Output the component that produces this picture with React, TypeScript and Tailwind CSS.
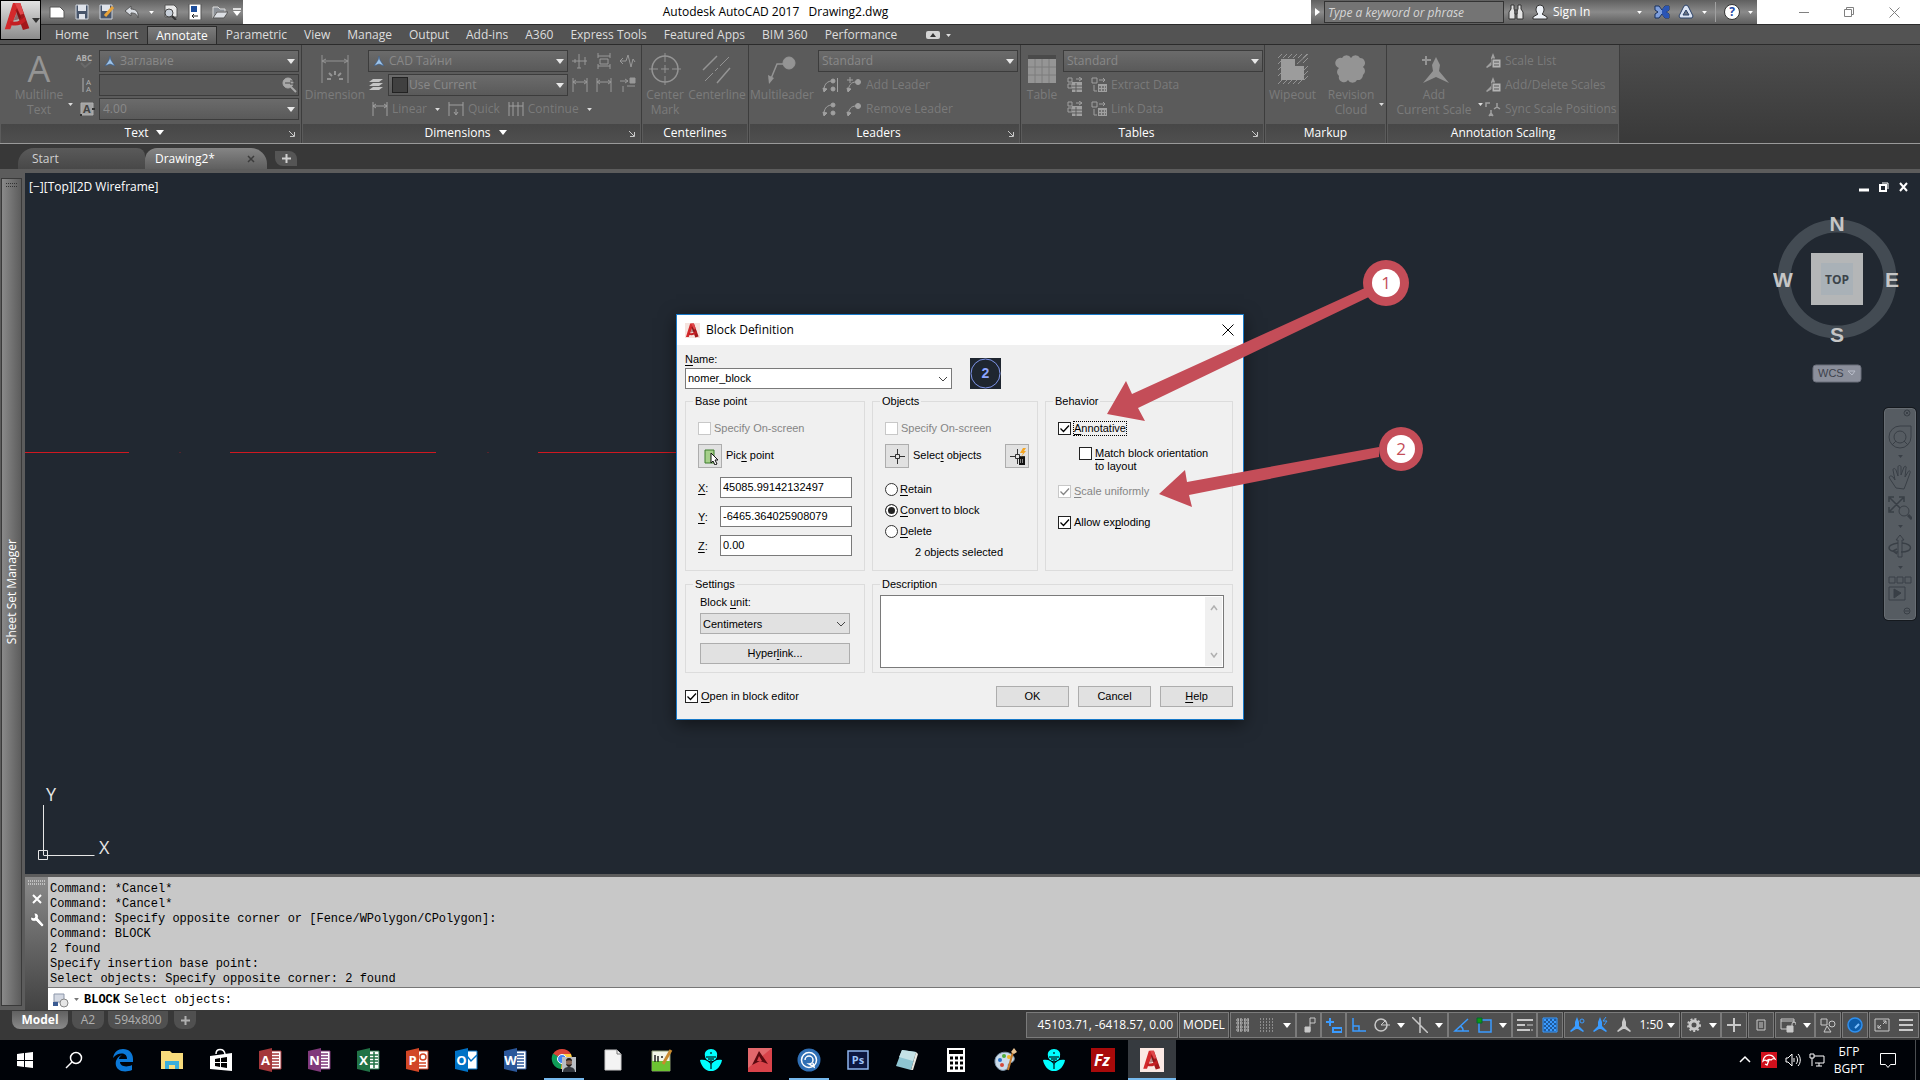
import { useState } from "react"
import type { ReactNode } from "react"
import clsx from "clsx"

const menuTabs = [
  "Home", "Insert", "Annotate", "Parametric", "View", "Manage", "Output", "Add-ins",
  "A360", "Express Tools", "Featured Apps", "BIM 360", "Performance",
]

const commandLog = [
  "Command: *Cancel*",
  "Command: *Cancel*",
  "Command: Specify opposite corner or [Fence/WPolygon/CPolygon]:",
  "Command: BLOCK",
  "2 found",
  "Specify insertion base point:",
  "Select objects: Specify opposite corner: 2 found",
]

type IconProps = { children: ReactNode; w?: number; h?: number; className?: string }

function Icon({ children, w = 16, h = 16, className }: IconProps) {
  return (
    <svg width={w} height={h} viewBox={`0 0 ${w} ${h}`} fill="none" stroke="currentColor" aria-hidden="true" className={clsx("shrink-0", className)}>
      {children}
    </svg>
  )
}

function Caret({ small, className }: { small?: boolean; className?: string }) {
  return (
    <svg width={small ? 5 : 8} height={small ? 3 : 5} viewBox="0 0 8 5" fill="currentColor" aria-hidden="true" className={clsx("shrink-0", className)}>
      <path d="M0 0h8L4 5z" />
    </svg>
  )
}

function AcadLogo({ size, className }: { size: number; className?: string }) {
  return (
    <svg width={size} height={size} viewBox="0 0 32 32" aria-hidden="true" className={clsx("shrink-0", className)}>
      <path d="M11 1h8l-8 21-3 8H2z" fill="#d3292b" />
      <path d="M19 1l10 28-7 2-8-22z" fill="#a3181b" />
      <path d="M13 1h6l4 12-4 1z" fill="#e0474a" />
      <path d="M8 21c6 2 12 0 16-5l1 5c-5 5-11 6-17 4z" fill="#c41f23" />
      <path d="M16 9l-4 11c3 0 6-1 8-3z" fill="#5a0d10" opacity=".45" />
    </svg>
  )
}

function ScaleMark({ children, className }: { children?: ReactNode; className?: string }) {
  return (
    <Icon className={className}>
      <path d="M8 0l2 5v4l5 5-1 1-5-3H7l-5 3-1-1 5-5V5z" fill="currentColor" stroke="none" />
      {children}
    </Icon>
  )
}

/* Ribbon */

function Panel({ title, width, caret, launcher, children }: { title: string; width: string; caret?: boolean; launcher?: boolean; children: ReactNode }) {
  return (
    <section className={clsx("flex shrink-0 flex-col border-r border-[#3d3d3d] bg-[#5b5b5b]", width)}>
      <div className="flex flex-1 pt-[5px]">{children}</div>
      <div
        className={clsx(
          "relative mx-px flex h-[19px] items-center justify-center gap-2 bg-gradient-to-b from-[#474747] to-[#4f4f4f] pb-0.5 text-white",
          launcher && "pr-3",
        )}
      >
        <span>{title}</span>
        {caret && <Caret />}
        {launcher && (
          <button aria-label={`${title} settings`} className="absolute right-1 top-1.5 text-[#c8c8c8]">
            <Icon w={8} h={8}><path d="M1 1l5 5M6.500 2v4.500H2" /></Icon>
          </button>
        )}
      </div>
    </section>
  )
}

function BigButton({ lines, icon, caret, width = "w-16" }: { lines: string[]; icon: ReactNode; caret?: boolean; width?: string }) {
  return (
    <button disabled className={clsx("relative flex shrink-0 flex-col items-center text-[#7c7c7c]", width)}>
      <span className="flex h-[37px] items-center text-[#949494]">{icon}</span>
      {lines.map((l) => <span key={l} className="whitespace-nowrap leading-[15px]">{l}</span>)}
      {caret && <Caret small className="absolute -right-0.5 top-[53px] text-[#dcdcdc]" />}
    </button>
  )
}

function RibbonSelect({ value, label, icon, width = "w-[200px]" }: { value: string; label: string; icon?: ReactNode; width?: string }) {
  return (
    <div className={clsx("relative h-[22px] shrink-0", width)}>
      <select
        aria-label={label}
        disabled
        className={clsx(
          "h-full w-full appearance-none border border-[#3c3c3c] bg-gradient-to-b from-[#6b6b6b] to-[#5a5a5a] text-[#898989] opacity-100",
          icon ? "pl-5" : "pl-[3px]",
        )}
      >
        <option>{value}</option>
      </select>
      {icon && <span className="absolute left-1 top-[3px]">{icon}</span>}
      <Caret className="absolute right-1 top-[9px] text-[#e8e8e8]" />
    </div>
  )
}

function SmallButton({ icon, label, caret }: { icon: ReactNode; label?: string; caret?: boolean }) {
  return (
    <button disabled className="flex h-[22px] items-center gap-1 whitespace-nowrap text-[#7a7a7a]">
      <span className="text-[#a0a0a0]">{icon}</span>
      {label}
      {caret && <Caret small className="ml-1 text-[#dcdcdc]" />}
    </button>
  )
}

const rows = "flex flex-col gap-[2px]"

const styleMark = (
  <Icon w={14}><path d="M7 3l1 4 4 6-5-2-5 2 4-6z" fill="#9cc3ea" stroke="#3f5f86" strokeWidth=".7" /></Icon>
)
const dimIcon = <Icon><path d="M1 1v14M15 1v14M1 5h14M4 3L1 5l3 2M12 3l3 2-3 2" /></Icon>
const leaderIcon = (plus: boolean) => (
  <Icon>
    <path d="M2 14C3 8 5 5 10 5" />
    <path d="M1 11l1 4 3-3z" fill="currentColor" />
    <circle cx="12" cy="5" r="2.500" fill="currentColor" />
    {plus && <path d="M4 0v6M1 3h6" />}
  </Icon>
)
const leadersIcon = (bar: boolean) => (
  <Icon>
    <path d="M2 14C2 8 4 5 9 4" />
    <path d="M1 11l1 4 3-3z" fill="currentColor" />
    <circle cx="11" cy="4" r="2" fill="currentColor" />
    <circle cx="11" cy="12" r="2" fill="currentColor" />
    {bar && <path d="M15.500 1v14" />}
  </Icon>
)
const dataIcon = (
  <Icon>
    <path d="M1 1h4v4H1zM1 7h4v4H1z" />
    <path d="M5 5h10v10H5z" fill="currentColor" stroke="none" />
    <path d="M5 9h10M5 12h10M9 6v9" stroke="#5b5b5b" />
    <path d="M9 2h6M12 0l3 2-3 2" />
  </Icon>
)
const exportIcon = (
  <Icon>
    <path d="M1 1h5v5H1zM8 3h6M12 1l2 2-2 2M3 8v6h3" />
    <path d="M7 7h9v8H7z" fill="currentColor" stroke="none" />
    <path d="M8 10h7M8 13h7" stroke="#444" strokeDasharray="2 1" />
  </Icon>
)
const scaleListIcon = (
  <ScaleMark>
    <path d="M7 6h9v9H7z" fill="#b4b4b4" stroke="#5b5b5b" />
    <path d="M9 9h5M9 12h5" stroke="#5b5b5b" />
  </ScaleMark>
)

function Ribbon() {
  return (
    <div className="flex h-[98px] bg-gradient-to-b from-[#4e4e4e] to-[#393939]">
      <Panel title="Text" width="w-[302px]" caret launcher>
        <div className="flex gap-1 pl-[7px]">
          <BigButton lines={["Multiline", "Text"]} caret icon={<span className="text-4xl leading-[37px]">A</span>} />
          <div className={clsx(rows, "w-5 items-end text-[#b0b0b0]")}>
            <span className="flex h-[22px] items-center"><Icon w={20} h={20}><text x="1" y="10" fontSize="8" fontWeight="700" fill="currentColor" stroke="none">ABC</text><path d="M6 12l4 4 6-5" stroke="#6a6a6a" strokeWidth="2" /></Icon></span>
            <span className="flex h-[22px] items-center"><Icon h={22}><path d="M4 4v14" /><text x="7" y="11" fontSize="8" fill="currentColor" stroke="none">A</text><text x="7" y="18" fontSize="8" fill="currentColor" stroke="none">A</text></Icon></span>
            <span className="flex h-[22px] items-center"><Icon h={18}><path d="M2 3h12v12H2z" fill="#a2a2a2" /><text x="4" y="13" fontSize="11" fontWeight="700" fill="#444" stroke="none">A</text><path d="M1 15h2M13 9h3" stroke="#333" strokeWidth="2" /></Icon></span>
          </div>
          <div className={rows}>
            <RibbonSelect label="Text style" value="Заглавие" icon={styleMark} />
            <div className="relative h-[22px] w-[200px]">
              <input aria-label="Find text" disabled className="h-full w-full border border-[#3c3c3c] bg-[#585858] pl-1" />
              <Icon className="absolute right-0.5 top-[3px] text-[#a8a8a8]"><circle cx="7" cy="6" r="5" fill="currentColor" /><path d="M10 10l5 5" strokeWidth="2" /><path d="M4 6h6M9 4h5M9 7h5" stroke="#4a4a4a" /></Icon>
            </div>
            <RibbonSelect label="Text height" value="4.00" />
          </div>
        </div>
      </Panel>

      <Panel title="Dimensions" width="w-[340px]" caret launcher>
        <div className="flex gap-px pl-px">
          <BigButton
            lines={["Dimension"]}
            icon={<Icon w={30} h={30}><path d="M2 1v28M28 1v28M2 7h26M6 5L2 7l4 2M24 5l4 2-4 2" /><path d="M15 17v4M9 19l3 3M21 19l-3 3M7 25h4M19 25h4" strokeWidth="2" /></Icon>}
          />
          <div className={rows}>
            <div className="flex items-center gap-1">
              <RibbonSelect label="Dimension style" value="CAD Тайни" icon={styleMark} />
              <span className="flex gap-2 text-[#999]">
                <Icon><path d="M0 8h15M7 1v14M5 15h4M13 4v8M3 6v4" /></Icon>
                <Icon><path d="M2 0v5M14 0v5M2 3h12M2 11v5M14 11v5M2 13h12M4 6h8v5H4z" /></Icon>
                <Icon><path d="M1 8h5l2-6 3 12 2-8 2 3M3 5L0 8l3 3" /></Icon>
              </span>
            </div>
            <div className="flex items-center gap-1">
              <Icon className="text-[#c4c4c4]"><path d="M5 2h10l-4 3H1zM5 6h10l-4 3H1zM5 10h10l-4 3H1z" fill="currentColor" stroke="none" /></Icon>
              <RibbonSelect label="Dimension layer" value="Use Current" width="w-[180px]" icon={<span className="block size-4 border border-[#222] bg-[#404040]" />} />
              <span className="flex gap-2 text-[#999]">
                {dimIcon}
                {dimIcon}
                <Icon><path d="M0 4h8M5 2l3 2-3 2M3 9v6M7 9h8" /><path d="M10 1h5v5h-5z" fill="currentColor" /></Icon>
              </span>
            </div>
            <div className="flex gap-2 pl-1">
              <SmallButton label="Linear" caret icon={dimIcon} />
              <SmallButton label="Quick" icon={<Icon><path d="M1 1v14M15 1v14M1 4h14M8 8v5M6 11l2 3 2-3" /></Icon>} />
              <SmallButton label="Continue" caret icon={<Icon><path d="M1 1v14M5 1v14M10 1v14M15 1v14M1 5h14" /></Icon>} />
            </div>
          </div>
        </div>
      </Panel>

      <Panel title="Centerlines" width="w-[107px]">
        <BigButton
          width="w-[46px]"
          lines={["Center", "Mark"]}
          icon={<Icon w={32} h={32}><circle cx="16" cy="16" r="13" strokeWidth="1.500" /><path d="M16 0v9M16 12v8M16 23v9M0 16h9M12 16h8M23 16h9" /></Icon>}
        />
        <BigButton
          width="w-[58px]"
          lines={["Centerline"]}
          icon={<Icon w={30} h={30}><path d="M1 16L15 2M15 29l13-15" strokeWidth="1.500" /><path d="M3 27l8-8M13 17l3-3M18 12l9-9" /></Icon>}
        />
      </Panel>

      <Panel title="Leaders" width="w-[272px]" launcher>
        <div className="flex gap-1 pl-px">
          <BigButton
            lines={["Multileader"]}
            icon={<Icon w={32} h={32}><path d="M4 28L11 11h8" strokeWidth="1.500" /><path d="M2 22l1 9 5-6z" fill="currentColor" stroke="none" /><circle cx="23" cy="10" r="6" fill="currentColor" /></Icon>}
          />
          <div className={rows}>
            <RibbonSelect label="Multileader style" value="Standard" />
            <div className="flex gap-2 pl-1"><SmallButton icon={leadersIcon(true)} /><SmallButton label="Add Leader" icon={leaderIcon(true)} /></div>
            <div className="flex gap-2 pl-1"><SmallButton icon={leadersIcon(false)} /><SmallButton label="Remove Leader" icon={leaderIcon(false)} /></div>
          </div>
        </div>
      </Panel>

      <Panel title="Tables" width="w-[244px]" launcher>
        <BigButton
          width="w-[42px]"
          lines={["Table"]}
          icon={<Icon w={30} h={30}><path d="M1 1h28v28H1z" fill="#959595" stroke="none" /><path d="M1 1h28v4H1z" fill="#4a4a4a" stroke="none" /><path d="M1 13h28M1 21h28M8 5v24M15 5v24M22 5v24" stroke="#7c7c7c" /></Icon>}
        />
        <div className={rows}>
          <RibbonSelect label="Table style" value="Standard" />
          <div className="flex gap-2 pl-1"><SmallButton icon={dataIcon} /><SmallButton label="Extract Data" icon={exportIcon} /></div>
          <div className="flex gap-2 pl-1"><SmallButton icon={dataIcon} /><SmallButton label="Link Data" icon={exportIcon} /></div>
        </div>
      </Panel>

      <Panel title="Markup" width="w-[122px]">
        <BigButton
          width="w-[55px]"
          lines={["Wipeout"]}
          icon={
            <Icon w={32} h={32}>
              <path d="M1 5l4-4M6 5l4-4M11 5l4-4M16 5l4-4M21 5l4-4M26 5l4-4M20 11l11-10M26 10l5-5M27 17l4-4M27 22l4-4M27 27l4-4M1 31l4-4M6 31l4-4M11 31l4-4M16 31l4-4M21 31l4-4M1 11l3-3M1 17l3-3M1 23l3-3" />
              <path d="M4 6h14v7h9v14H4z" fill="#9c9c9c" stroke="none" />
            </Icon>
          }
        />
        <BigButton
          width="w-[62px]"
          caret
          lines={["Revision", "Cloud"]}
          icon={<Icon w={32} h={32}><path d="M7 5a5 5 0 0 1 9 0 5 5 0 0 1 9 0 5 5 0 0 1 3 9 5 5 0 0 1 0 8 5 5 0 0 1-6 5 5 5 0 0 1-9 0 5 5 0 0 1-9-4 5 5 0 0 1 0-8 5 5 0 0 1 3-10z" fill="currentColor" stroke="none" /></Icon>}
        />
      </Panel>

      <Panel title="Annotation Scaling" width="w-[233px]">
        <BigButton
          width="w-[94px]"
          caret
          lines={["Add", "Current Scale"]}
          icon={<Icon w={30} h={32}><path d="M17 4l4 8-1 6 10 12-13-6-13 6 10-12-1-6z" fill="currentColor" stroke="none" /><path d="M7 3v9M3 7h9" strokeWidth="2" /></Icon>}
        />
        <div className={clsx(rows, "pl-1")}>
          <SmallButton label="Scale List" icon={scaleListIcon} />
          <SmallButton label="Add/Delete Scales" icon={scaleListIcon} />
          <SmallButton
            label="Sync Scale Positions"
            icon={<Icon><path d="M1 6V2h4M6 9v6M4 15l2-3 2 3M12 2v4M9 8l3-2 3 2" strokeWidth="1.500" /></Icon>}
          />
        </div>
      </Panel>
    </div>
  )
}

/* Title bar */

function TitleBar() {
  return (
    <header className="relative flex h-6 items-start bg-white">
      <div className="flex h-6 w-[243px] items-center gap-[9px] bg-gradient-to-b from-[#626262] via-[#8a8a8a] to-[#5e5e5e] pl-[49px] text-white">
        <Icon><path d="M1 3h10l4 4v7H1z" fill="#fff" stroke="#555" /></Icon>
        <Icon><path d="M2 1h12v14H2z" fill="#46546a" stroke="#cdd3dc" /><path d="M4 1h8v6H4zM5 10h6v5H5z" fill="#dfe3ea" stroke="none" /></Icon>
        <Icon><path d="M1 1h12v14H1z" fill="#46546a" stroke="#cdd3dc" /><path d="M3 1h8v6H3z" fill="#dfe3ea" stroke="none" /><path d="M6 12l8-9" stroke="#e8a33a" strokeWidth="3" /></Icon>
        <Icon><path d="M7 2L1 7l6 5V9c4 0 6 1 7 5 1-6-2-9-7-9z" fill="#d9dde3" stroke="#555" /></Icon>
        <Caret small className="-mr-px" />
        <Icon><path d="M3 1h9l3 3v9H3z" fill="#e8e8e8" stroke="#555" /><circle cx="7" cy="9" r="4" fill="#c8d0da" stroke="#444" /><path d="M10 12l4 4" stroke="#333" strokeWidth="2" /></Icon>
        <Icon><path d="M2 0h12v16H2z" fill="#fff" stroke="#555" /><path d="M4 2h6v6H4z" fill="#1d4e9c" stroke="none" /><path d="M5 12h6M7 10l-2 2 2 2" stroke="#222" /></Icon>
        <Icon><path d="M1 3h5l2 2h5v3H5l-4 6z" fill="#8d9299" stroke="#ddd" /><path d="M5 8h11l-4 6H1z" fill="#dcdfe4" stroke="#555" /></Icon>
        <Icon w={8} h={8} className="-ml-1"><path d="M0 1h8" strokeWidth="1.500" /><path d="M0 3h8L4 8z" fill="#fff" stroke="none" /></Icon>
      </div>

      <h1 className="absolute inset-x-0 top-0 flex h-6 items-center justify-center whitespace-pre pr-[369px] text-black">
        Autodesk AutoCAD 2017   Drawing2.dwg
      </h1>

      <div className="relative ml-auto flex h-6 w-[446px] items-center bg-gradient-to-b from-[#606060] via-[#8a8a8a] to-[#5e5e5e] text-white">
        <button aria-label="Collapse search" className="flex h-full w-[13px] items-center justify-center"><Icon w={5} h={8}><path d="M0 0l5 4-5 4z" fill="#fff" stroke="none" /></Icon></button>
        <input aria-label="Search" placeholder="Type a keyword or phrase" className="h-[22px] w-[180px] border border-[#333] bg-[#747474] pl-[3px] italic placeholder:text-[#d6d6d6]" />
        <div className="flex flex-1 items-center gap-2 pl-1">
          <Icon><path d="M3 1h3v4l1 2v8H1V8l2-3zM10 1h3v4l2 3v7H9V7l1-2zM7 6h2v4H7z" fill="#e4e4e4" stroke="#333" /></Icon>
          <button className="flex flex-1 items-center gap-[5px]">
            <Icon><path d="M8 1a4 4 0 0 1 4 4c0 3-1 4-2 5l5 3v2H1v-2l5-3C5 9 4 8 4 5a4 4 0 0 1 4-4z" fill="#eef2f8" stroke="#333" /></Icon>
            <span>Sign In</span>
            <Caret small className="ml-auto mr-1 text-white" />
          </button>
          <Icon><path d="M1 2h4l3 4 3-4h4v4l-3 2 3 2v4h-4l-3-4-3 4H1v-4l3-2-3-2z" fill="#7f9fdc" stroke="#17305f" /><path d="M8 6l3-4h4v4l-3 2 3 2v4h-4l-3-4z" fill="#2a55b5" stroke="none" /></Icon>
          <Icon><path d="M8 1l2 1 5 10-1 2H2l-1-2L6 2z" fill="#dbe4f4" stroke="#2b4269" /><path d="M8 6l3 5H5z" fill="#6a7280" stroke="#2b4269" /></Icon>
          <Caret small />
          <span className="h-5 w-px bg-[#a0a0a0]" />
          <button aria-label="Help" className="flex size-4 items-center justify-center rounded-full border border-[#333] bg-white font-bold text-[#2449a8]">?</button>
          <Caret small className="mr-1" />
        </div>
      </div>
      <div className="flex h-6 w-[163px] items-center justify-end gap-[35px] pr-5 text-[#808080]">
        <button aria-label="Minimize"><Icon w={10} h={10}><path d="M0 5.500h10" /></Icon></button>
        <button aria-label="Restore"><Icon w={10} h={10}><path d="M.5 2.500h7v7h-7zM2.500 2V.5h7v7H8" /></Icon></button>
        <button aria-label="Close"><Icon w={11} h={11}><path d="M.5.5l10 10M10.500.5l-10 10" /></Icon></button>
      </div>
      <button aria-label="Application menu" className="absolute left-0 top-0 z-10 flex h-10 w-[41px] items-center border border-black bg-gradient-to-b from-[#e2e2e2] to-[#8c8c8c] pl-0.5">
        <AcadLogo size={29} className="mb-2" />
        <Caret className="text-[#333]" />
      </button>
    </header>
  )
}

function MenuBar() {
  const [active, setActive] = useState("Annotate")
  return (
    <nav className="flex h-[21px] items-end gap-px border-y border-[#2b2b2b] bg-[#535353] pl-[47px] text-[#dedede]">
      {menuTabs.map((t) => (
        <button
          key={t}
          onClick={() => setActive(t)}
          className={clsx(
            "h-[18px] whitespace-nowrap px-2 leading-[16px]",
            t === active && "border border-b-0 border-[#2b2b2b] bg-gradient-to-b from-[#7c7c7c] to-[#5d5d5d] text-white",
          )}
        >
          {t}
        </button>
      ))}
      <button aria-label="Ribbon display" className="ml-5 flex h-[18px] items-center gap-1.5">
        <Icon w={14} h={8}><rect width="14" height="8" rx="2" fill="#d4d4d4" stroke="none" /><path d="M4 6l3-4 3 4z" fill="#333" stroke="none" /></Icon>
        <Caret small />
      </button>
    </nav>
  )
}

function FileTabs() {
  return (
    <div className="flex h-[26px] items-end border-t border-[#9a9a9a] bg-[#383838] pl-[18px] text-[#d0d0d0]">
      <button className="h-[21px] w-[127px] rounded-tl-2xl rounded-tr-lg bg-gradient-to-b from-[#5a5a5a] to-[#484848] pl-[14px] text-left">Start</button>
      <div className="flex h-[21px] w-[122px] items-center justify-between rounded-tl-xl rounded-tr-2xl bg-gradient-to-b from-[#858585] to-[#5f5f5f] pl-[10px] pr-3 text-white">
        <button>Drawing2*</button>
        <button aria-label="Close tab" className="text-[#3c3c3c]"><Icon w={8} h={8}><path d="M1 1l6 6M7 1L1 7" strokeWidth="1.500" /></Icon></button>
      </div>
      <button aria-label="New tab" className="mb-[3px] ml-2 flex h-[15px] w-[22px] items-center justify-center rounded-tr-lg rounded-bl-lg bg-[#555] text-[#cfcfcf]">
        <Icon w={9} h={9}><path d="M4.500 0v9M0 4.500h9" strokeWidth="2" /></Icon>
      </button>
    </div>
  )
}

/* Drawing area */

function ViewCube() {
  return (
    <svg width="130" height="210" viewBox="0 0 130 210" className="absolute right-[17px] top-[36px] font-['Liberation_Sans',sans-serif]" role="img" aria-label="View cube">
      <circle cx="64" cy="70" r="53" fill="none" stroke="#434b53" strokeWidth="13" />
      <path d="M38 44h52v52H38z" fill="#b4b6b7" />
      <path d="M48 54h32v32H48z" fill="#a9b1b7" />
      <g fill="#c6c6c6" fontWeight="700" textAnchor="middle">
        <text x="64" y="22" fontSize="21">N</text>
        <text x="64" y="133" fontSize="21">S</text>
        <text x="10" y="78" fontSize="21">W</text>
        <text x="119" y="78" fontSize="21">E</text>
        <text x="64" y="75" fontSize="12" fill="#3c444b" className="font-['Open_Sans',sans-serif]">TOP</text>
      </g>
      <rect x="40" y="156" width="48" height="17" rx="3" fill="#8b8f9b" stroke="#6a6e7a" />
      <text x="45" y="168" fontSize="11" fill="#3d424c">WCS</text>
      <path d="M75 162h7l-3 4z" fill="#8b8f9b" stroke="#b8bcc8" />
    </svg>
  )
}

function NavBar() {
  return (
    <div className="absolute right-1 top-[235px] flex w-8 flex-col items-center gap-[5px] rounded border border-[#676d73] bg-[#565c62] pb-1 text-[#393f46] outline outline-[#15191e]">
      <Icon w={8} h={8} className="mr-1 self-end"><circle cx="4" cy="4" r="3" /><path d="M2.500 2.500l3 3M5.500 2.500l-3 3" /></Icon>
      <Icon w={24} h={28}><path d="M12 4h11v11a11 11 0 1 1-11-11z" /><circle cx="12" cy="15" r="6" /><path d="M8 19l-4 4M16 19l4 4" /></Icon>
      <Caret small />
      <Icon w={24} h={28}><path d="M8 25L2 16c-2-3 1-4 3-2l2 3L5 7c0-2 2-2 3 0l2 6V4c0-2 3-2 3 0v8l3-8c1-1 3-1 2 1l-1 9 3-5c1-2 3-1 2 1l-4 11-2 5z" /></Icon>
      <Icon w={24} h={24}><path d="M2 2l13 13M15 2L2 15M1 6V1h5M11 1h5v5M1 11v5h5" strokeWidth="1.500" /><circle cx="16" cy="15" r="5" fill="#565c62" /><path d="M20 19l4 4" strokeWidth="3" /></Icon>
      <Caret small />
      <Icon w={24} h={28}><path d="M12 2l4 5h-2v17h-4V7H8z" /><path d="M10 10c-12 2-12 8 0 9M14 10c12 1 11 9-1 9M9 16l-4 2 4 3" strokeWidth="1.500" /></Icon>
      <Caret small />
      <Icon w={24} h={28}><path d="M1 3h6v6H1zM9 3h6v6H9zM17 3h6v6h-6zM1 13h16v13H1z" /><path d="M6 15l7 4-7 5z" fill="currentColor" /></Icon>
      <Icon w={8} h={8} className="mr-1 self-end"><circle cx="4" cy="4" r="3" /><path d="M2 4h4" /></Icon>
    </div>
  )
}

function Canvas() {
  return (
    <main className="relative min-h-0 flex-1 overflow-hidden bg-[#212831] text-white">
      <div className="flex h-7 items-center justify-between pl-1 pr-3">
        <span>[−][Top][2D Wireframe]</span>
        <span className="flex items-center gap-2.5 text-white">
          <Icon w={10} h={10}><path d="M0 8h10" strokeWidth="3" /></Icon>
          <Icon w={10} h={10}><path d="M1 3h6v6H1z" strokeWidth="2" /><path d="M3 1h6v6" /></Icon>
          <Icon w={9} h={10}><path d="M1 1l7 8M8 1L1 9" strokeWidth="2" /></Icon>
        </span>
      </div>
      {/* dashed axis of the drawing */}
      <svg width="700" height="4" className="absolute left-0 top-[278px]" stroke="#d01820" aria-hidden="true">
        <path d="M0 1.500h104M205 1.500h206M513 1.500h187" />
        <path d="M154 1.500h2M462 1.500h2" opacity=".3" />
      </svg>
      <svg width="100" height="100" viewBox="0 0 100 100" className="absolute bottom-0 left-3" fill="none" stroke="#e6e6e6" role="img" aria-label="UCS icon">
        <path d="M6.500 31v50M6.500 81.500h51M1.500 76.500h9v9h-9z" />
        <g fill="#e6e6e6" stroke="none" fontSize="18">
          <text x="9" y="27">Y</text>
          <text x="62" y="80">X</text>
        </g>
      </svg>
      <ViewCube />
      <NavBar />
    </main>
  )
}

/* Command line */

function CommandLine() {
  return (
    <section className="flex h-[136px] shrink-0 border-t-[3px] border-[#5c5c5c]">
      <div className="flex w-[23px] shrink-0 flex-col items-center gap-2 bg-gradient-to-b from-[#8a8a8a] to-[#434343] pt-[3px] text-white">
        <Icon w={18} h={6}><path d="M0 1h18M0 4h18" stroke="#c0c0c0" strokeWidth="2" strokeDasharray="1 1" /></Icon>
        <button aria-label="Close command line" className="flex"><Icon w={10} h={10}><path d="M1 1l8 8M9 1L1 9" strokeWidth="2" /></Icon></button>
        <button aria-label="Customize" className="flex"><Icon><path d="M2 5l3 1 1-1-1-4c4 0 5 3 4 5l6 7-2 2-6-6C3 10 1 8 2 5z" fill="#fff" stroke="#444" strokeWidth=".5" /></Icon></button>
      </div>
      <div className="flex min-w-0 flex-1 flex-col font-['Liberation_Mono',monospace] text-black">
        <div className="flex-1 bg-[#c8c8c8] pl-[2px] pt-[5px] leading-[15px]">
          {commandLog.map((l, i) => <p key={i}>{l}</p>)}
        </div>
        <label className="flex h-[23px] items-center border-t border-[#777] bg-white pl-[5px] pt-px">
          <Icon><path d="M1 2h10v8H1z" fill="#d3d8e2" stroke="#8d97aa" /><path d="M0 10h5v4H0z" fill="#3b5b92" stroke="none" /><circle cx="11" cy="11" r="4" fill="#e6e6e6" stroke="#888" /></Icon>
          <Caret small className="mx-[5px] text-[#777]" />
          <b>BLOCK</b>
          <input defaultValue="Select objects:" className="ml-1 flex-1 outline-none" />
        </label>
      </div>
    </section>
  )
}

/* Block Definition dialog */

function Accel({ text }: { text: string }) {
  const [before, rest] = text.split("&")
  if (!rest) return <span>{text}</span>
  return <span>{before}<u className="underline-offset-2">{rest[0]}</u>{rest.slice(1)}</span>
}

function Check({ text, checked, disabled, focus }: { text: string; checked?: boolean; disabled?: boolean; focus?: boolean }) {
  return (
    <label className={clsx("flex items-start gap-[3px] whitespace-pre leading-[13px]", disabled && "text-[#858585]")}>
      <span className="relative size-[13px] shrink-0">
        <input
          type="checkbox"
          defaultChecked={checked}
          disabled={disabled}
          className={clsx("peer block size-[13px] appearance-none border bg-white", disabled ? "border-[#c8c8c8]" : "border-[#222]")}
        />
        <Icon w={13} h={13} className="pointer-events-none absolute left-0 top-0 hidden peer-checked:block"><path d="M2.500 6.500l3 3 5.500-6" strokeWidth="1.300" /></Icon>
      </span>
      <span className={clsx(focus && "outline-1 outline-dotted outline-black")}><Accel text={text} /></span>
    </label>
  )
}

function Radio({ text, checked }: { text: string; checked?: boolean }) {
  return (
    <label className="flex h-[14px] items-center gap-[2px]">
      <input
        type="radio"
        name="objects"
        defaultChecked={checked}
        className="size-[13px] appearance-none rounded-full border border-[#333] bg-white checked:border-[#333] checked:bg-[#222] checked:shadow-[inset_0_0_0_2px_#fff]"
      />
      <Accel text={text} />
    </label>
  )
}

function Group({ title, className, children }: { title: string; className?: string; children: ReactNode }) {
  return (
    <fieldset className={clsx("min-w-0 border border-[#dcdcdc] px-3", className)}>
      <legend className="-ml-[5px] px-[2px] leading-[14px]">{title}</legend>
      {children}
    </fieldset>
  )
}

function PushButton({ text, className }: { text: string; className?: string }) {
  return (
    <button className={clsx("h-[21px] border border-[#adadad] bg-[#e1e1e1] leading-[19px]", className)}>
      <Accel text={text} />
    </button>
  )
}

const chevron = (
  <Icon w={10} h={6} className="pointer-events-none absolute right-1 top-2 text-[#444]"><path d="M1 1l4 4 4-4" /></Icon>
)
const crosshair = <path d="M8.500 1v5M8.500 11v5M1 8.500h5M11 8.500h5M6.500 6.500h4v4h-4z" stroke="#333" />
const toolButton = "flex size-6 items-center justify-center border border-[#adadad] bg-[#e1e1e1]"

const coords = [
  ["X", "45085.99142132497"],
  ["Y", "-6465.364025908079"],
  ["Z", "0.00"],
]

function BlockDialog() {
  return (
    <div
      role="dialog"
      aria-label="Block Definition"
      className="absolute inset-x-0 top-[314px] mx-auto h-[406px] w-[568px] border border-[#1879c8] bg-[#f0f0f0] font-['Liberation_Sans',Arial,sans-serif] text-[11px] leading-[14px] text-black shadow-[0_4px_16px_rgba(0,0,0,.5)]"
    >
      <div className="flex h-[30px] items-center gap-[6px] bg-white pl-2 pr-[9px] font-['Open_Sans',sans-serif] text-xs">
        <AcadLogo size={15} className="bg-[#f5e3de]" />
        <span className="flex-1">Block Definition</span>
        <button aria-label="Close"><Icon w={12} h={12}><path d="M.5.5l11 11M11.500.5l-11 11" /></Icon></button>
      </div>

      <div className="pl-2 pr-[10px]">
        <div className="flex h-11 items-end gap-[18px]">
          <div className="flex w-[267px] flex-col gap-[2px]">
            <label htmlFor="name"><Accel text="&Name:" /></label>
            <span className="relative">
              <select id="name" className="block h-[21px] w-full appearance-none border border-[#7a7a7a] bg-white pb-px pl-[2px]"><option>nomer_block</option></select>
              {chevron}
            </span>
          </div>
          <svg width="31" height="31" className="bg-[#1f2630]" role="img" aria-label="Block preview">
            <circle cx="15.500" cy="15.500" r="14.500" fill="none" stroke="#7d93e8" />
            <text x="15.500" y="20" textAnchor="middle" fontSize="14" fontWeight="700" fill="#8ea5ff">2</text>
          </svg>
        </div>

        <div className="mt-[5px] grid h-[177px] grid-cols-[180px_166px_1fr] gap-[7px]">
          <Group title="Base point">
            <div className="mt-[14px] flex flex-col">
              <Check text="Specify On-screen" disabled />
              <div className="my-[9px] flex items-center gap-1">
                <button id="pick" className={toolButton}>
                  <Icon w={17} h={17}><path d="M3 2h9v13H3z" fill="#a6d08a" stroke="#3d7d2c" /><path d="M9 5v10l2-2 2 4 2-1-2-4h3z" fill="#fff" stroke="#111" /></Icon>
                </button>
                <label htmlFor="pick" className="pb-0.5"><Accel text="Pic&k point" /></label>
              </div>
              <div className="flex flex-col gap-2">
                {coords.map(([axis, value]) => (
                  <label key={axis} className="flex items-center">
                    <span className="w-6"><Accel text={`&${axis}:`} /></span>
                    <input defaultValue={value} className="h-[21px] w-[132px] border border-[#7a7a7a] bg-white pb-px pl-[2px]" />
                  </label>
                ))}
              </div>
            </div>
          </Group>

          <Group title="Objects">
            <div className="mt-[14px] flex flex-col">
              <Check text="Specify On-screen" disabled />
              <div className="mb-[14px] mt-[9px] flex items-center gap-1">
                <button id="select" className={toolButton}><Icon w={17} h={17}>{crosshair}</Icon></button>
                <label htmlFor="select" className="flex-1 pb-0.5"><Accel text="Selec&t objects" /></label>
                <button aria-label="Quick select" className={clsx(toolButton, "-mr-1")}>
                  <Icon w={17} h={17}>{crosshair}<path d="M14 0l-3 5h3l-2 4 5-6h-2l2-3z" fill="#f5a623" stroke="none" /><path d="M10 9h6v8h-6z" fill="#111" stroke="none" /><path d="M11 12h4M11 14h4" stroke="#fff" strokeDasharray="1 1" /></Icon>
                </button>
              </div>
              <div className="flex flex-col gap-[7px]">
                <Radio text="&Retain" />
                <Radio text="&Convert to block" checked />
                <Radio text="&Delete" />
                <p className="pl-[30px]">2 objects selected</p>
              </div>
            </div>
          </Group>

          <Group title="Behavior">
            <div className="mt-[14px] flex flex-col items-start">
              <Check text="&Annotative" checked focus />
              <div className="my-3 ml-[21px]"><Check text={"&Match block orientation\nto layout"} /></div>
              <Check text="&Scale uniformly" checked disabled />
              <div className="mt-[18px]"><Check text="Allow ex&ploding" checked /></div>
            </div>
          </Group>
        </div>

        <div className="mt-[6px] grid h-24 grid-cols-[180px_1fr] gap-[7px]">
          <Group title="Settings">
            <div className="ml-0.5 flex w-[150px] flex-col pt-1">
              <label htmlFor="unit"><Accel text="Block &unit:" /></label>
              <span className="relative mt-1">
                <select id="unit" className="block h-[21px] w-full appearance-none border border-[#adadad] bg-[#e1e1e1] pl-[2px]"><option>Centimeters</option></select>
                {chevron}
              </span>
              <PushButton text="Hyper&link..." className="mt-[9px]" />
            </div>
          </Group>
          <Group title="Description">
            <div className="relative -ml-[5px] -mr-1 mt-1 h-[73px]">
              <textarea aria-label="Description" className="block h-full w-full resize-none border border-[#7a7a7a] bg-white" />
              <div className="absolute inset-y-0.5 right-0.5 flex w-[17px] flex-col items-center justify-between bg-[#f0f0f0] py-2 text-[#b0b0b0]">
                <Icon w={8} h={6}><path d="M1 5l3-4 3 4" strokeWidth="1.500" /></Icon>
                <Icon w={8} h={6}><path d="M1 1l3 4 3-4" strokeWidth="1.500" /></Icon>
              </div>
            </div>
          </Group>
        </div>

        <div className="mt-[13px] flex items-center gap-[9px]">
          <div className="flex-1"><Check text="&Open in block editor" checked /></div>
          <PushButton text="OK" className="w-[73px]" />
          <PushButton text="Cancel" className="w-[73px]" />
          <PushButton text="&Help" className="w-[73px]" />
        </div>
      </div>

      {/* callouts */}
      <svg width="330" height="260" viewBox="1100 254 330 260" className="pointer-events-none absolute left-[423px] top-[-61px]" role="img" aria-label="Callouts 1 and 2">
        <g fill="#c44d58">
          <path d="M1107 414l19-33 6 13 235-107 4 9-233 112 7 13z" />
          <path d="M1159 494l26-24 2 12 192-35v10l-190 38 3 12z" />
          <circle cx="1386" cy="283" r="23" />
          <circle cx="1401" cy="449" r="22" />
        </g>
        <circle cx="1386" cy="283" r="14" fill="#fff" />
        <circle cx="1401" cy="449" r="14" fill="#fff" />
        <g fill="#c44d58" fontSize="17" textAnchor="middle" className="font-['Open_Sans',sans-serif]">
          <text x="1386" y="289">1</text>
          <text x="1401" y="455">2</text>
        </g>
      </svg>
    </div>
  )
}

/* Status bar */

function Cell({ children, className, width }: { children: ReactNode; className?: string; width: string }) {
  return (
    <div className={clsx("flex h-[26px] shrink-0 items-center justify-around border border-[#7b7b7b] bg-[#505050]", width, className)}>
      {children}
    </div>
  )
}

const blue = "text-[#3a9bff]"
const layoutTab = "h-[18px] rounded-b-lg bg-[#505050] leading-[18px]"

function StatusBar() {
  return (
    <div className="flex h-[30px] shrink-0 items-start justify-between bg-[#383838] pr-px text-white">
      <div className="flex items-start gap-1 pl-3 pt-px text-[#b0b0b0]">
        <button className="h-[18px] w-14 rounded-b-lg bg-gradient-to-b from-[#606060] to-[#8a8a8a] font-bold leading-[18px] text-white">Model</button>
        <button className={clsx(layoutTab, "w-8")}>A2</button>
        <button className={clsx(layoutTab, "w-[60px]")}>594x800</button>
        <button aria-label="New layout" className={clsx(layoutTab, "ml-0.5 flex w-[22px] items-center justify-center")}><Icon w={9} h={9}><path d="M4.500 0v9M0 4.500h9" strokeWidth="2" /></Icon></button>
      </div>
      <div className="flex pt-[2px] text-[#c8c8c8]">
        <Cell width="w-[152px]" className="justify-end! whitespace-nowrap pr-1 text-white">45103.71, -6418.57, 0.00</Cell>
        <Cell width="w-[50px]" className="ml-px text-white"><button>MODEL</button></Cell>
        <Cell width="w-[66px]" className="ml-px">
          <Icon><path d="M3 1v14M6 1v14M10 1v14M13 1v14" /><path d="M1 3h14M1 6h14M1 10h14M1 13h14" strokeDasharray="1 1" /></Icon>
          <Icon><path d="M1 2h14M1 5h14M1 8h14M1 11h14M1 14h14" strokeDasharray="1 2" /></Icon>
          <Caret className="text-white" />
        </Cell>
        <Cell width="w-[25px]"><Icon><path d="M9 1h5v5H9zM9 6v8" /><path d="M4 10h5v5H4z" fill="currentColor" /></Icon></Cell>
        <Cell width="w-[25px]" className={blue}><Icon><path d="M4 1v8M0 5h8M7 11h9v4H7z" strokeWidth="2" /></Icon></Cell>
        <Cell width="w-[102px]">
          <Icon className={blue}><path d="M2 1v13h13M2 9h6v5" strokeWidth="1.500" /></Icon>
          <Icon><circle cx="7" cy="8" r="6" strokeWidth="1.500" /><path d="M7 8h9M7 8l5-5" /></Icon>
          <Caret className="text-white" />
          <Icon><path d="M8 0v16M0 0l16 16" strokeWidth="1.500" /></Icon>
          <Caret className="text-white" />
        </Cell>
        <Cell width="w-[64px]">
          <Icon className={blue}><path d="M15 2L2 14h14M7 9a5 5 0 0 1 3 5" strokeWidth="1.500" /></Icon>
          <Icon className={blue}><path d="M3 3h12v12H3z" strokeWidth="1.500" /><path d="M1 1h5v5H1z" fill="#0f9a0f" stroke="#063" /></Icon>
          <Caret className="text-white" />
        </Cell>
        <Cell width="w-[25px]"><Icon><path d="M0 3h16M0 8h8M0 13h13" strokeWidth="2" /><path d="M10 8h6M14 13h2" /></Icon></Cell>
        <Cell width="w-[26px]" className={blue}><Icon><path d="M1 1h14v14H1z" fill="#205a9c" /><path d="M2 3h12M2 7h12M2 11h12" strokeWidth="2" strokeDasharray="2 2" /><path d="M4 5h10M4 9h10M4 13h10" strokeWidth="2" strokeDasharray="2 2" /></Icon></Cell>
        <Cell width="w-[116px]" className="ml-px">
          <ScaleMark className={blue}><circle cx="13" cy="4" r="2" /></ScaleMark>
          <ScaleMark className={blue}><path d="M14 0l-3 4h4l-3 4" /></ScaleMark>
          <ScaleMark />
          <button className="flex items-center gap-1 text-white">1:50 <Caret /></button>
        </Cell>
        <Cell width="w-[40px]" className="ml-px">
          <Icon><circle cx="8" cy="8" r="4" strokeWidth="3" /><circle cx="8" cy="8" r="6" strokeWidth="2" strokeDasharray="2 2" /></Icon>
          <Caret className="text-white" />
        </Cell>
        <Cell width="w-[26px]"><Icon><path d="M8 1v14M1 8h14" strokeWidth="2" /></Icon></Cell>
        <Cell width="w-[26px]" className="ml-px"><Icon><path d="M4 3h8v10H4zM6 6h4M6 8h4M6 10h4" /></Icon></Cell>
        <Cell width="w-[40px]" className="ml-px">
          <Icon><path d="M14 6V2H1v10h6M1 4h13" /><path d="M7 9h6v6H7z" fill="currentColor" /><path d="M12 9V7a2 2 0 0 1 4 0v1" /></Icon>
          <Caret className="text-white" />
        </Cell>
        <Cell width="w-[26px]"><Icon><path d="M1 2h6v6H1zM7 9l4 6H4z" /><circle cx="12" cy="7" r="3" /></Icon></Cell>
        <Cell width="w-[26px]" className="ml-px"><Icon><circle cx="8" cy="8" r="7" fill="#0d5ca8" stroke="#2f8fee" strokeWidth="1.500" /><path d="M8 11l4-4" stroke="#7cc0ff" strokeWidth="2" /></Icon></Cell>
        <Cell width="w-[50px]" className="ml-px">
          <Icon><path d="M1 2h14v12H1zM4 11l3-3M9 7l3-3M4 8v3h3M9 4h3v3" /></Icon>
          <Icon><path d="M1 3h14M1 8h14M1 13h14" strokeWidth="2" /></Icon>
        </Cell>
      </div>
    </div>
  )
}

/* Windows taskbar */

function OfficeIcon({ letter, color, children }: { letter: string; color: string; children: ReactNode }) {
  return (
    <Icon w={24} h={24}>
      <path d="M12 3h11v18H12z" fill="#fff" stroke={color} />
      <g stroke={color} strokeWidth="1.500">{children}</g>
      <path d="M1 3l13-3v24L1 21z" fill={color} stroke="none" />
      <text x="7.500" y="17" textAnchor="middle" fontSize="13" fontWeight="700" fill="#fff" stroke="none">{letter}</text>
    </Icon>
  )
}

const lines = <path d="M14 6h7M14 9h7M14 12h7M14 15h7M14 18h7" />

const flower = (
  <Icon w={24} h={24}>
    <path d="M12 1c4 0 7 3 6 7 0 3-3 5-6 5s-6-2-6-5c-1-4 2-7 6-7z" fill="#0ff" stroke="none" />
    <path d="M1 12c5-1 9 1 11 5 2-4 6-6 11-5-1 6-5 10-9 11h-4c-4-1-8-5-9-11z" fill="#0ff" stroke="none" />
    <path d="M7 9h10M12 4v2M12 12v9M9 11h6" stroke="#044" strokeWidth="1.500" />
  </Icon>
)

const taskItems: { name: string; icon: ReactNode; bar?: string; active?: boolean }[] = [
  { name: "Start", icon: <Icon><path d="M0 2l7-1v7H0zM8 1l8-1v8H8zM0 9h7v6l-7-1zM8 9h8v7l-8-1z" fill="#fff" stroke="none" /></Icon> },
  { name: "Search", icon: <Icon w={18} h={18}><circle cx="11" cy="7" r="5.500" strokeWidth="1.500" /><path d="M7 11l-6 6" strokeWidth="1.500" /></Icon> },
  { name: "Edge", icon: <Icon w={22} h={24}><path d="M1 10C2 4 6 1 11 1c6 0 10 4 10 10v3H8c0 4 6 6 12 3v5C10 26 2 21 4 13c1-3 3-5 6-6-2 1-3 3-3 4h8c0-7-9-7-14-1z" fill="#0b78d7" stroke="none" /></Icon> },
  { name: "Explorer", icon: <Icon w={22} h={22}><path d="M0 2h9l2 2h11v16H0z" fill="#f8dc7c" stroke="none" /><path d="M4 20v-8h14v8h-4v-4H8v4z" fill="#3aaedb" stroke="none" /></Icon> },
  { name: "Store", icon: <Icon w={22} h={24}><path d="M6 6c0-6 8-6 9 0" strokeWidth="1.500" /><path d="M0 8l22-3v18L0 21z" fill="#fff" stroke="none" /><path d="M5 11l5-1v4H5zM11 10l6-1v5h-6zM5 15h5v4l-5-1zM11 15h6v5l-6-1z" fill="#000" stroke="none" /></Icon> },
  { name: "Access", icon: <OfficeIcon letter="A" color="#a4373a">{lines}</OfficeIcon> },
  { name: "OneNote", icon: <OfficeIcon letter="N" color="#80397b">{lines}</OfficeIcon> },
  { name: "Excel", icon: <OfficeIcon letter="X" color="#217346"><path d="M14 7h8M14 10h8M14 13h8M14 16h8M18 4v16" /></OfficeIcon> },
  { name: "PowerPoint", icon: <OfficeIcon letter="P" color="#d24726"><circle cx="18" cy="9" r="3" /><path d="M14 15h7M14 18h7" /></OfficeIcon> },
  { name: "Outlook", icon: <OfficeIcon letter="O" color="#0072c6"><path d="M13 8l4 5 6-6" /></OfficeIcon> },
  { name: "Word", icon: <OfficeIcon letter="W" color="#2b579a">{lines}</OfficeIcon> },
  {
    name: "Chrome",
    bar: "w-10",
    icon: (
      <Icon w={26} h={24}>
        <path d="M11 11L2 6a10.500 10.500 0 0 1 18 0z" fill="#db4437" stroke="none" />
        <path d="M11 11L2 5.500A10.500 10.500 0 0 0 10 21z" fill="#0f9d58" stroke="none" />
        <path d="M11 11h10a10.500 10.500 0 0 1-11 10z" fill="#ffcd40" stroke="none" />
        <path d="M11 6h9a10 10 0 0 1 1 5h-7z" fill="#ffcd40" stroke="none" />
        <circle cx="11" cy="11" r="4.500" fill="#4285f4" stroke="#fff" />
        <path d="M11 9h14v15H11z" fill="#b9bec4" stroke="none" />
        <path d="M12 24c0-4 3-5 6-5s6 1 6 5z" fill="#34383f" stroke="none" />
        <ellipse cx="18" cy="14" rx="3" ry="4" fill="#8a6a58" stroke="none" />
        <path d="M15 13c0-4 6-4 6 0-2-1-4-1-6 0zM15 16c1 4 5 4 6 0-2 1-4 1-6 0z" fill="#221c1a" stroke="none" />
      </Icon>
    ),
  },
  { name: "Document", icon: <Icon w={18} h={22}><path d="M1 1h12l4 4v16H1z" fill="#f4f4f4" stroke="#ccc" /><path d="M13 1v4h4" stroke="#777" /></Icon> },
  { name: "Notepad++", icon: <Icon w={22} h={24}><path d="M1 3h18v20H1z" fill="#f2f6e8" stroke="#8a9a70" /><path d="M1 13h18v10H1z" fill="#6cc232" stroke="none" /><path d="M4 7v7M7 8v6M10 9h2" stroke="#222" strokeWidth="1.500" /><path d="M12 16l8-14" stroke="#c98a2e" strokeWidth="3" /></Icon> },
  { name: "Flower", icon: flower },
  { name: "AutoCAD viewer", icon: <Icon w={24} h={24}><path d="M0 0h24v24H0z" fill="#d9434a" stroke="none" /><path d="M0 0h24L0 20z" fill="#f0a0a0" stroke="none" opacity=".4" /><path d="M11 3l9 13-8-3-8 4z" fill="#5a0a10" stroke="none" /><path d="M11 8l3 5H9z" fill="#d9434a" stroke="none" /></Icon> },
  { name: "Chat", bar: "w-10", icon: <Icon w={24} h={24}><circle cx="12" cy="12" r="11.500" fill="#2f6fb4" stroke="none" /><circle cx="12" cy="12" r="7.500" strokeWidth="1.500" /><path d="M8 12a4 4 0 1 1 4 4l5 3-1-4" strokeWidth="1.500" /></Icon> },
  { name: "Photoshop", icon: <Icon w={22} h={22}><path d="M1 2h20v18H1z" fill="#0c1740" stroke="#8fb6ee" strokeWidth="1.500" /><text x="11" y="15" textAnchor="middle" fontSize="11" fontWeight="700" fill="#9cc4fa" stroke="none">Ps</text></Icon> },
  { name: "Notebook", icon: <Icon w={24} h={24}><path d="M7 2l14 2-5 18L1 18z" fill="#8ec5d2" stroke="none" /><path d="M7 2l14 2-3 9L4 9z" fill="#c5e2e6" stroke="none" /><path d="M21 4l2 2-5 16h-2z" fill="#e8e8e0" stroke="none" /></Icon> },
  { name: "Calculator", icon: <Icon w={18} h={24}><path d="M0 0h18v24H0z" fill="#fff" stroke="none" /><path d="M2 2h14v4H2z" fill="#000" stroke="none" /><path d="M3 10h13M3 15h13M3 20h13" stroke="#000" strokeWidth="3" strokeDasharray="3 2" /></Icon> },
  { name: "Paint", icon: <Icon w={24} h={24}><path d="M2 12C3 5 12 2 18 6c5 3 4 8-1 9-3 1-1 4-3 6C9 25 1 20 2 12z" fill="#cbdcea" stroke="#7b93a8" /><circle cx="7" cy="12" r="2" fill="#2a72c8" stroke="none" /><circle cx="11" cy="8" r="2" fill="#4fae3c" stroke="none" /><circle cx="16" cy="9" r="2" fill="#f0b429" stroke="none" /><circle cx="9" cy="17" r="2" fill="#d64a3a" stroke="none" /><path d="M15 22l5-18" stroke="#c47a2c" strokeWidth="2" /><path d="M18 4l3-4 3 4-3 2z" fill="#e8c392" stroke="none" /></Icon> },
  { name: "Flower editor", icon: flower },
  { name: "FileZilla", icon: <Icon w={24} h={24}><path d="M0 0h24v24H0z" fill="#a80a0a" stroke="none" /><text x="11" y="18" textAnchor="middle" fontSize="16" fontWeight="700" fontStyle="italic" fill="#fff" stroke="none">Fz</text></Icon> },
  { name: "AutoCAD", bar: "w-full", active: true, icon: <span className="flex size-6 items-center justify-center bg-[#fbe9e4]"><AcadLogo size={20} /></span> },
]

function Taskbar() {
  return (
    <footer className="flex h-10 shrink-0 items-stretch justify-between bg-[#000308] text-white">
      <div className="flex gap-px pl-px">
        {taskItems.map((t) => (
          <button key={t.name} aria-label={t.name} className={clsx("relative flex w-12 items-center justify-center", t.active && "bg-[#363a3f]")}>
            {t.icon}
            {t.bar && <span className={clsx("absolute bottom-0 h-0.5 bg-[#76b9ed]", t.bar)} />}
          </button>
        ))}
      </div>
      <div className="flex items-center gap-2 pr-1">
        <Icon w={12} h={16}><path d="M1 10l5-5 5 5" strokeWidth="1.500" /></Icon>
        <Icon className="ml-0.5 bg-[#d0101c]"><path d="M2 9C3 2 11 1 14 7c-2-1-3 0-4 1-2-1-3-1-4 1-1-1-3-1-4 0zM8 8l-2 5-2-1" strokeWidth="1.300" /></Icon>
        <Icon><path d="M1 6h2l4-4v12l-4-4H1zM9 6v4M11 4c2 2 2 6 0 8M13 2c3 3 3 9 0 12" /></Icon>
        <Icon><path d="M5 4h10v7H6M10 11v3M7 14h6M1 2h4v4H1zM3 6v8" /></Icon>
        <div className="w-8 text-center leading-[17px]"><p>БГР</p><p>BGPT</p></div>
        <Icon w={18} h={18} className="ml-1.5"><path d="M1.500 2.500h15v11h-5l-2.500 3-2.500-3h-5z" /></Icon>
        <span className="ml-[10px] h-full w-px bg-[#4a4d50]" />
      </div>
    </footer>
  )
}

export default function App() {
  return (
    <div className="relative flex h-screen flex-col overflow-hidden bg-[#5c5c5c] font-['Open_Sans','Noto_Sans',sans-serif] text-xs leading-4">
      <TitleBar />
      <MenuBar />
      <Ribbon />
      <FileTabs />
      <div className="flex min-h-0 flex-1 pt-1">
        <aside className="flex w-[25px] shrink-0 pb-1 pl-px pr-[3px] pt-[5px]">
          <div className="relative flex flex-1 items-center justify-center border border-[#3a3a3a] bg-gradient-to-r from-[#8a8a8a] to-[#5c5c5c] text-white">
            <Icon w={12} h={4} className="absolute top-1"><path d="M0 .5h12M0 3.500h12" stroke="#333" strokeDasharray="1 1" /></Icon>
            <span className="rotate-180 whitespace-nowrap [writing-mode:vertical-rl]">Sheet Set Manager</span>
          </div>
        </aside>
        <div className="flex min-w-0 flex-1 flex-col">
          <Canvas />
          <CommandLine />
        </div>
      </div>
      <StatusBar />
      <Taskbar />
      <BlockDialog />
    </div>
  )
}
